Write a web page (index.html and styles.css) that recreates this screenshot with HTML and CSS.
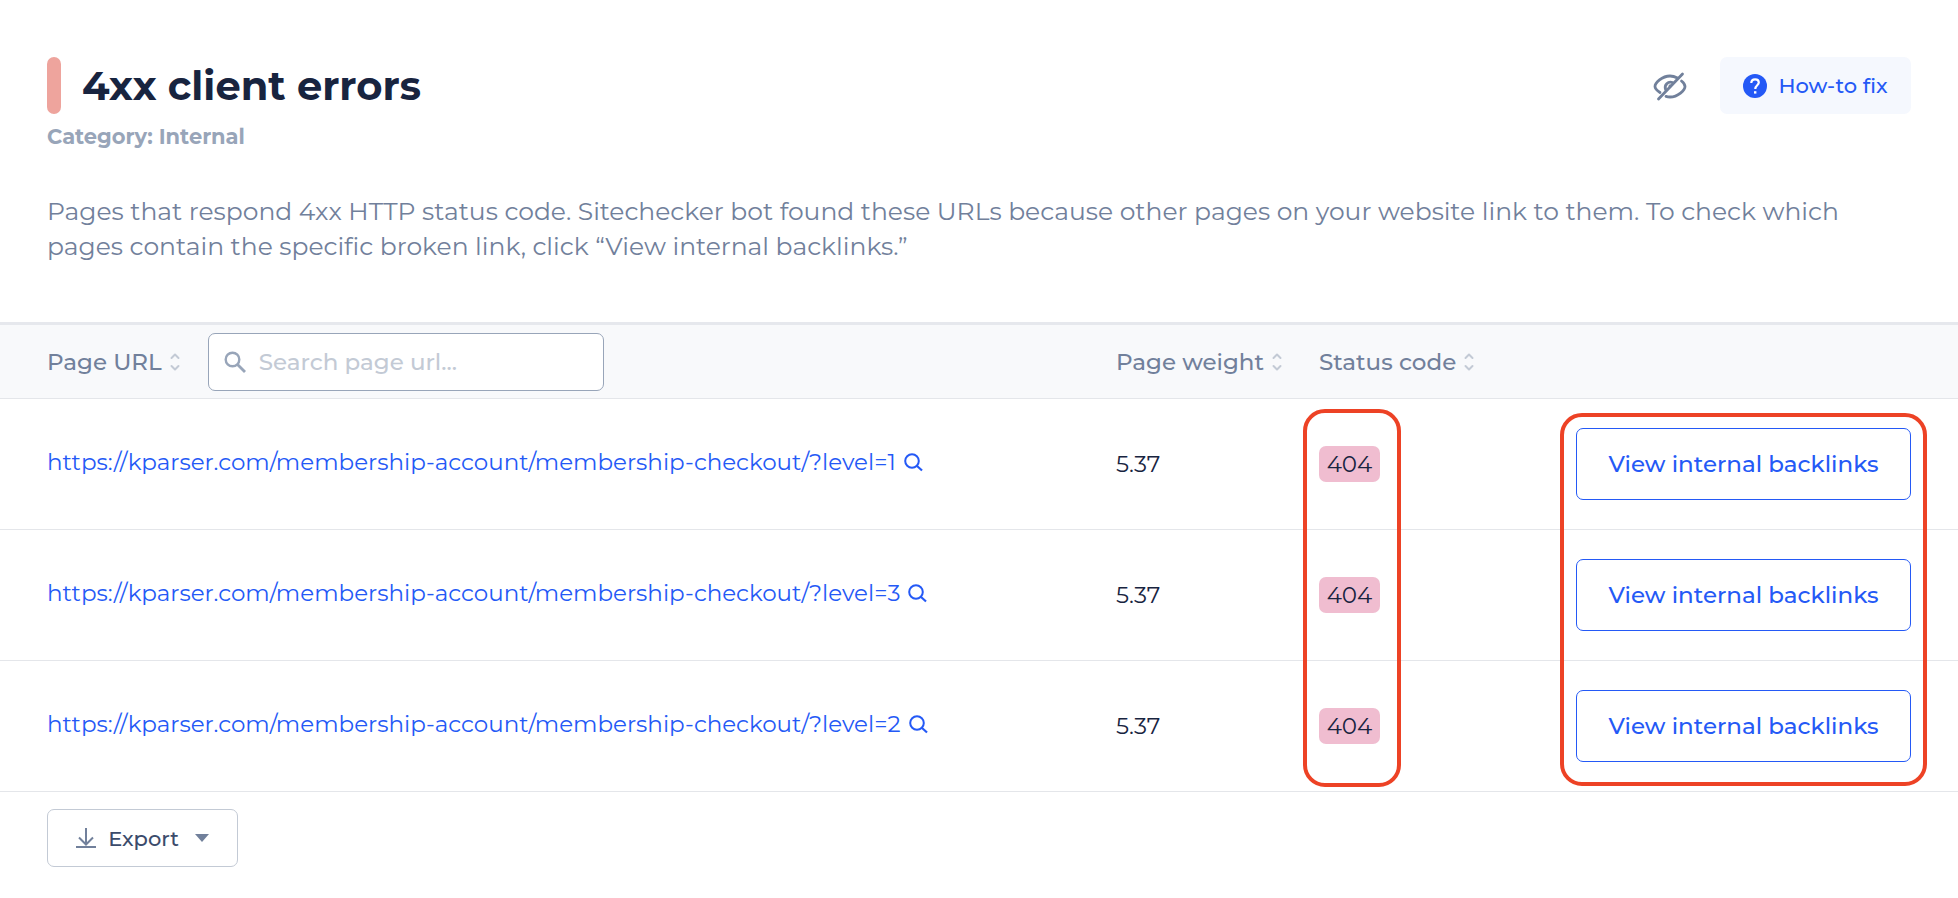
FILE: index.html
```html
<!DOCTYPE html>
<html lang="en">
<head>
<meta charset="utf-8">
<title>4xx client errors</title>
<link rel="stylesheet" href="styles.css">
</head>
<body>
<svg width="0" height="0" class="sprite" aria-hidden="true">
  <symbol id="sort" viewBox="0 0 10 18">
    <path d="M1.500 5 5 1.500 8.500 5M1.500 13 5 16.500 8.500 13" fill="none" stroke="currentColor" stroke-width="2" stroke-linecap="round" stroke-linejoin="round"/>
  </symbol>
  <symbol id="search" viewBox="0 0 22 22">
    <circle cx="8.500" cy="8.500" r="6.800" fill="none" stroke="currentColor" stroke-width="2.400"/>
    <path d="M13 13 21 21" fill="none" stroke="currentColor" stroke-width="2.800"/>
  </symbol>
  <symbol id="lens" viewBox="0 0 19 19">
    <circle cx="8" cy="8" r="6.800" fill="none" stroke="currentColor" stroke-width="2"/>
    <path d="M12.500 12.500 18 17.500" fill="none" stroke="currentColor" stroke-width="2.200"/>
  </symbol>
</svg>

<header class="head">
  <div class="head-row">
    <h1 class="title">4xx client errors</h1>
    <button class="hide-btn" type="button" aria-label="Hide issue">
      <svg width="34" height="30" viewBox="0 0 34 30" fill="none" stroke="currentColor" stroke-width="2.800" stroke-linecap="round">
        <path d="M7 21.500C4 19.500 2 17 2 15.500 2 12 9 5 17 5c3 0 5.500 1 7.500 2"/>
        <path d="M28.500 10c2.500 2 3.500 4 3.500 5.500C32 19 25 26 17 26c-1.500 0-2.800-.2-4-.6"/>
        <path d="M12.600 18.500C11 14 15 9.800 19.500 11.500"/>
        <path d="M17 15.500v-.5"/>
        <path d="M5.500 28 29.500 3"/>
      </svg>
    </button>
    <a class="howto" href="#howto">
      <svg width="24" height="24" viewBox="0 0 24 24">
        <circle cx="12" cy="12" r="12" fill="currentColor"/>
        <path d="M8.300 9c0-2.300 1.600-3.700 3.800-3.700s3.700 1.400 3.700 3.300c0 2.700-3.500 2.800-3.500 6.400" fill="none" stroke="#fff" stroke-width="2.200"/>
        <path d="M11 17.200h2.400v2.400H11z" fill="#fff"/>
      </svg>
      How-to fix
    </a>
  </div>
  <p class="category">Category: Internal</p>
  <p class="desc">Pages that respond 4xx HTTP status code. Sitechecker bot found these URLs because other pages on your website link to them. To check which pages contain the specific broken link, click “View internal backlinks.”</p>
</header>

<div class="table-wrap">
  <table class="pages">
    <thead>
      <tr>
        <th class="col-url">
          <div class="url-head">
            <button class="sort" type="button">Page URL <svg width="10" height="18"><use href="#sort"/></svg></button>
            <label class="search">
              <svg width="22" height="22"><use href="#search"/></svg>
              <input type="text" placeholder="Search page url..." aria-label="Search page url">
            </label>
          </div>
        </th>
        <th class="col-weight"><button class="sort" type="button">Page weight <svg width="10" height="18"><use href="#sort"/></svg></button></th>
        <th class="col-status"><button class="sort" type="button">Status code <svg width="10" height="18"><use href="#sort"/></svg></button></th>
        <th class="col-action"></th>
      </tr>
    </thead>
    <tbody>
      <tr>
        <td class="col-url"><a class="link" href="#level1">https://kparser.com/membership-account/membership-checkout/?level=1 <svg width="19" height="19"><use href="#lens"/></svg></a></td>
        <td>5.37</td>
        <td><span class="code">404</span></td>
        <td class="col-action"><button class="backlinks" type="button">View internal backlinks</button></td>
      </tr>
      <tr>
        <td class="col-url"><a class="link" href="#level3">https://kparser.com/membership-account/membership-checkout/?level=3 <svg width="19" height="19"><use href="#lens"/></svg></a></td>
        <td>5.37</td>
        <td><span class="code">404</span></td>
        <td class="col-action"><button class="backlinks" type="button">View internal backlinks</button></td>
      </tr>
      <tr>
        <td class="col-url"><a class="link" href="#level2">https://kparser.com/membership-account/membership-checkout/?level=2 <svg width="19" height="19"><use href="#lens"/></svg></a></td>
        <td>5.37</td>
        <td><span class="code">404</span></td>
        <td class="col-action"><button class="backlinks" type="button">View internal backlinks</button></td>
      </tr>
    </tbody>
  </table>
  <!-- highlights over the status and action columns -->
  <div class="mark mark-status"></div>
  <div class="mark mark-action"></div>
</div>

<footer class="foot">
  <button class="export" type="button">
    <svg width="20" height="20" viewBox="0 0 20 20" fill="none" stroke="#71809b" stroke-width="2">
      <path d="M10 0v16M3 9.500l7 7 7-7M0 19h20"/>
    </svg>
    Export
    <svg class="caret" width="14" height="8" viewBox="0 0 14 8"><path d="M0 0h14L7 8z" fill="#71809b"/></svg>
  </button>
</footer>
</body>
</html>
```
FILE: styles.css
```css
* { box-sizing: border-box; }
body {
  margin: 0;
  background: #fff;
  color: #18243f;
  font-family: Montserrat, Inter, "Liberation Sans", sans-serif;
  font-size: 23px;
}
button, input { font: inherit; color: inherit; }
button { cursor: pointer; }
svg { flex: none; }
.sprite { position: absolute; }

.head { padding: 57px 47px 58px; }
.head-row { display: flex; align-items: center; }
.title {
  display: flex;
  align-items: center;
  gap: 21px;
  margin: 0 auto 0 0;
  font-size: 40px;
  line-height: 57px;
  font-weight: 700;
}
.title::before {
  content: "";
  width: 14px;
  height: 57px;
  border-radius: 7px;
  background: #eea49d;
}
.hide-btn {
  display: flex;
  margin-right: 33px;
  padding: 0;
  border: 0;
  background: none;
  color: #71809b;
}
.howto {
  display: flex;
  align-items: center;
  justify-content: center;
  gap: 11px;
  width: 191px;
  height: 57px;
  border-radius: 7px;
  background: #f5f8fe;
  color: #2459f6;
  font-size: 21px;
  font-weight: 500;
  text-decoration: none;
}
.category {
  margin: 9px 0 0;
  color: #98a5b9;
  font-size: 21px;
  line-height: 28px;
  font-weight: 700;
}
.desc {
  margin: 43px 0 0;
  color: #71809b;
  font-size: 25px;
  line-height: 35px;
}

.table-wrap { position: relative; }
.pages {
  width: 100%;
  table-layout: fixed;
  border-collapse: separate;
  border-spacing: 0;
  border-top: 3px solid #e6e8ed;
}
.pages th, .pages td {
  padding: 0;
  text-align: left;
  border-bottom: 1px solid #e4e6ea;
}
.pages th {
  height: 74px;
  background: #f8f9fb;
  color: #71809b;
  font-weight: 500;
}
.pages td { height: 131px; }
.pages .col-url { padding-left: 47px; }
.pages td.col-url { padding-bottom: 4px; }
.col-weight { width: 203px; }
.col-status { width: 257px; }
.col-action { width: 382px; }
.url-head { display: flex; align-items: center; gap: 28px; }
.sort {
  display: flex;
  align-items: center;
  gap: 8px;
  padding: 0;
  border: 0;
  background: none;
  white-space: nowrap;
}
.sort svg { color: #c3cad5; }
.search {
  display: flex;
  align-items: center;
  gap: 13px;
  width: 396px;
  height: 58px;
  padding: 0 15px;
  border: 1px solid #98a5b9;
  border-radius: 7px;
  background: #fff;
  color: #98a5b9;
}
.search input {
  flex: 1;
  min-width: 0;
  padding: 0;
  border: 0;
  outline: 0;
  background: none;
  color: #18243f;
}
.search input::placeholder { color: #c3cad5; opacity: 1; }
.link { color: #2459f6; text-decoration: none; white-space: nowrap; }
.link svg { margin-left: 2px; vertical-align: -2px; }
.code {
  display: inline-block;
  width: 61px;
  border-radius: 7px;
  background: #f0bdd0;
  line-height: 36px;
  text-align: center;
}
.backlinks {
  width: 335px;
  height: 72px;
  padding: 0;
  border: 1px solid #2459f6;
  border-radius: 7px;
  background: #fff;
  color: #2459f6;
  font-weight: 500;
}
.mark {
  position: absolute;
  border: 4px solid #ed4225;
  border-radius: 22px;
  pointer-events: none;
}
.mark-status { top: 87px; right: 557px; bottom: 5px; width: 98px; }
.mark-action { top: 91px; right: 31px; bottom: 6px; width: 367px; }

.foot { padding: 17px 47px 31px; }
.export {
  display: flex;
  align-items: center;
  justify-content: center;
  gap: 12px;
  width: 191px;
  height: 58px;
  padding: 0;
  border: 1px solid #c3cad5;
  border-radius: 7px;
  background: #fff;
  color: #3b4b6b;
  font-size: 21px;
  font-weight: 500;
}
.caret { margin-left: 4px; }
```
